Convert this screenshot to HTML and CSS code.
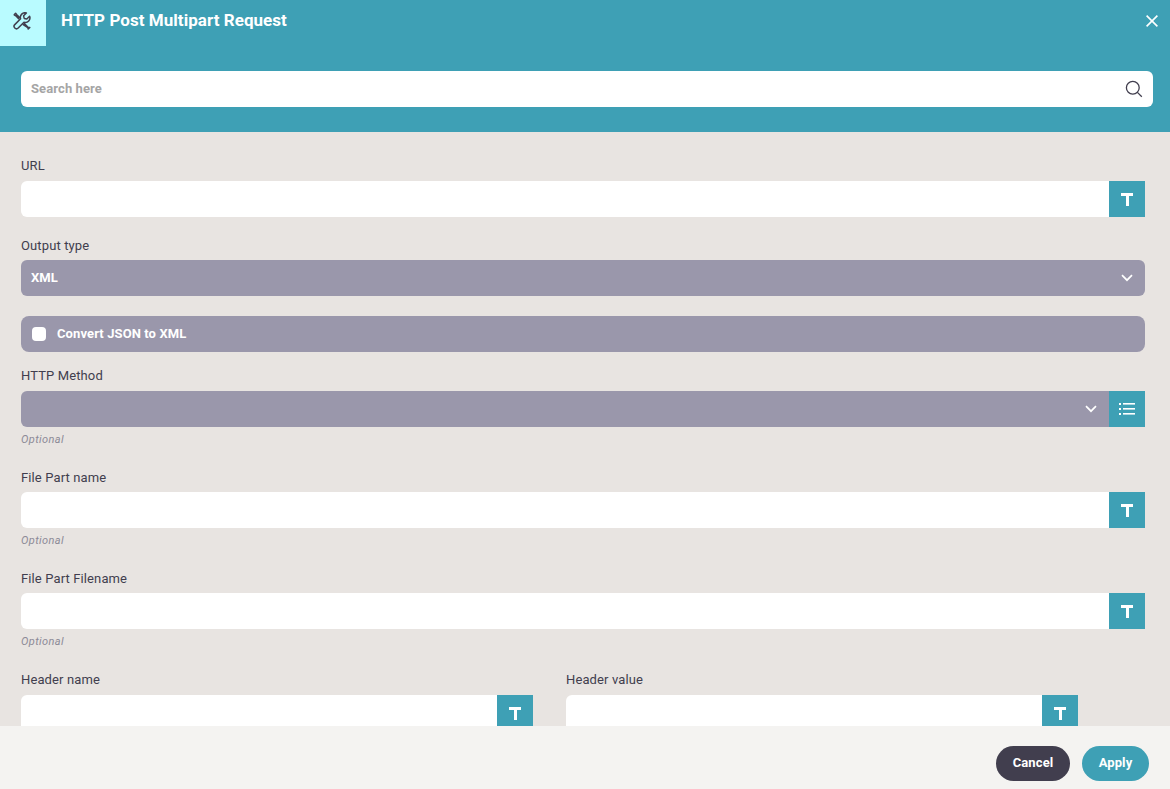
FILE: index.html
```html
<!DOCTYPE html>
<html lang="en">
<head>
<meta charset="utf-8">
<title>HTTP Post Multipart Request</title>
<link rel="stylesheet" href="styles.css">
</head>
<body>
<div class="dialog">
  <header class="head">
    <div class="title-row">
      <div class="tool-icon">
        <svg width="18" height="18" viewBox="0 0 18 18" fill="none" stroke="#413e4e" stroke-width="1.5" stroke-linejoin="round" stroke-linecap="round">
          <path d="M16.6 4.2 13.8 7 11.2 6.4 10.6 3.8 13.4 1A4.6 4.6 0 0 0 7.6 6.8L1.8 12.6A2.4 2.4 0 0 0 5.2 16L11 10.3A4.6 4.6 0 0 0 16.6 4.2Z"/>
          <path d="M5.6 6.6 2.8 3.8 1.2 2.8 2.6 1.2 3.8 2.8 6.8 5.6"/>
          <path d="M11.4 11.6 15 15.2 16.8 15.4 15.2 17 14.8 15.6 10.2 12.6"/>
        </svg>
      </div>
      <h1 class="title">HTTP Post Multipart Request</h1>
      <button class="close" type="button" aria-label="Close">
        <svg width="12" height="12" viewBox="0 0 12 12" stroke="#fff" stroke-width="1.6" fill="none"><path d="M.6.6l10.8 10.8M11.4.6.6 11.4"/></svg>
      </button>
    </div>
    <div class="search">
      <span class="search-text">Search here</span>
      <svg width="18" height="18" viewBox="0 0 18 18" fill="none" stroke="#413e4e" stroke-width="1.3"><circle cx="7.8" cy="7.8" r="6.4"/><path d="M12.4 12.4l4.4 4.4"/></svg>
    </div>
  </header>

  <main class="body">
    <section class="field first">
      <label class="label">URL</label>
      <div class="control">
        <div class="input"></div>
        <button class="side" type="button"><span class="t-icon"></span></button>
      </div>
    </section>

    <section class="field tight">
      <label class="label">Output type</label>
      <div class="select rounded"><span class="select-value">XML</span>
        <svg class="chev" width="12" height="8" viewBox="0 0 12 8" fill="none" stroke="#fff" stroke-width="1.7"><path d="M1 1.2 6 6.2 11 1.2"/></svg>
      </div>
    </section>

    <div class="check">
      <span class="box"></span>
      <span class="check-text">Convert JSON to XML</span>
    </div>

    <section class="field method">
      <label class="label wide">HTTP Method</label>
      <div class="control">
        <div class="select left-rounded">
          <svg class="chev" width="12" height="8" viewBox="0 0 12 8" fill="none" stroke="#fff" stroke-width="1.7"><path d="M1 1.2 6 6.2 11 1.2"/></svg>
        </div>
        <button class="side" type="button">
          <svg width="16" height="12" viewBox="0 0 16 12" fill="#fff"><rect x="0" y="0" width="2" height="2"/><rect x="4" y="0" width="12" height="1.6"/><rect x="0" y="5" width="2" height="2"/><rect x="4" y="5" width="12" height="1.6"/><rect x="0" y="10" width="2" height="2"/><rect x="4" y="10" width="12" height="1.6"/></svg>
        </button>
      </div>
      <p class="hint">Optional</p>
    </section>

    <section class="field after-hint">
      <label class="label">File Part name</label>
      <div class="control">
        <div class="input"></div>
        <button class="side" type="button"><span class="t-icon"></span></button>
      </div>
      <p class="hint">Optional</p>
    </section>

    <section class="field after-hint">
      <label class="label">File Part Filename</label>
      <div class="control">
        <div class="input"></div>
        <button class="side" type="button"><span class="t-icon"></span></button>
      </div>
      <p class="hint">Optional</p>
    </section>

    <div class="pair">
      <section class="pair-item">
        <label class="label wide">Header name</label>
        <div class="control">
          <div class="input"></div>
          <button class="side" type="button"><span class="t-icon"></span></button>
        </div>
      </section>
      <section class="pair-item">
        <label class="label wide">Header value</label>
        <div class="control">
          <div class="input"></div>
          <button class="side" type="button"><span class="t-icon"></span></button>
        </div>
      </section>
    </div>
  </main>

  <footer class="foot">
    <button class="btn cancel" type="button">Cancel</button>
    <button class="btn apply" type="button">Apply</button>
  </footer>
</div>
</body>
</html>
```
FILE: styles.css
```css
* { box-sizing: border-box; }
html, body { margin: 0; height: 100%; overflow: hidden; }
body { font-family: Roboto, "Liberation Sans", sans-serif; color: #413e4e; }
button { border: 0; padding: 0; font: inherit; }

.dialog { width: 1170px; height: 789px; display: flex; flex-direction: column; background: #e8e4e1; }

.head { height: 132px; flex: none; background: #3ea0b5; }
.title-row { display: flex; height: 46px; align-items: flex-start; }
.tool-icon { width: 46px; height: 46px; background: #b9fbff; display: flex; align-items: center; justify-content: center; padding: 0 3px 4px 0; }
.title { margin: 0 0 0 15px; flex: 1; font-size: 17px; font-weight: 700; letter-spacing: .05px; line-height: 40px; color: #fff; }
.close { width: 12px; height: 12px; margin: 15px 12px 0 0; background: none; display: flex; }
.search { margin: 25px 17px 0 21px; height: 36px; background: #fff; border-radius: 6px; display: flex; align-items: center; justify-content: space-between; padding: 0 10px; }
.search-text { font-size: 13px; font-weight: 700; letter-spacing: .1px; line-height: 16px; color: #a5a5a5; }

.body { flex: 1; min-height: 0; overflow: hidden; padding: 0 25px 0 21px; }
.field { display: block; }
.first { padding-top: 26px; }
.tight { margin-top: 21px; }
.method { margin-top: 16px; }
.after-hint { margin-top: 23px; }

.label { display: block; font-size: 13px; letter-spacing: .12px; line-height: 16px; height: 16px; margin-bottom: 7px; color: #413e4e; }
.tight .label, .after-hint .label { margin-bottom: 6px; }
.control { display: flex; height: 36px; }
.input { flex: 1; background: #fff; border-radius: 6px 0 0 6px; }
.side { width: 36px; height: 36px; flex: none; background: #3ea0b5; display: flex; align-items: center; justify-content: center; }
.t-icon { position: relative; width: 12px; height: 13px; border-top: 3px solid #fff; }
.t-icon::after { content: ""; position: absolute; left: 4.5px; top: -1px; width: 3px; height: 11px; background: #fff; }

.select { height: 36px; background: #9a97ab; display: flex; align-items: center; justify-content: space-between; padding: 0 12px 0 10px; flex: 1; }
.rounded { border-radius: 6px; }
.left-rounded { border-radius: 6px 0 0 6px; justify-content: flex-end; }
.select-value { font-size: 13px; font-weight: 700; letter-spacing: .1px; line-height: 16px; color: #fff; }

.check { margin-top: 20px; height: 36px; background: #9a97ab; border-radius: 8px; display: flex; align-items: center; padding-left: 11px; }
.box { width: 14px; height: 14px; background: #fff; border-radius: 4px; }
.check-text { margin-left: 11px; font-size: 13px; font-weight: 700; letter-spacing: .1px; line-height: 16px; color: #fff; }

.hint { margin: 0; height: 20px; padding-top: 6px; font-size: 11px; line-height: 14px; font-style: italic; letter-spacing: .4px; color: #8c8a97; }

.pair { margin-top: 23px; display: grid; grid-template-columns: 512px 512px; column-gap: 33px; }

.foot { height: 63px; flex: none; background: #f4f3f1; display: flex; justify-content: flex-end; align-items: flex-start; gap: 12px; padding: 20px 21px 0 0; }
.btn { height: 35px; border-radius: 18px; font-size: 13px; font-weight: 700; letter-spacing: .1px; line-height: 16px; padding-bottom: 2px; color: #fff; }
.cancel { width: 74px; background: #413e4e; }
.apply { width: 67px; background: #3ea0b5; }
```
